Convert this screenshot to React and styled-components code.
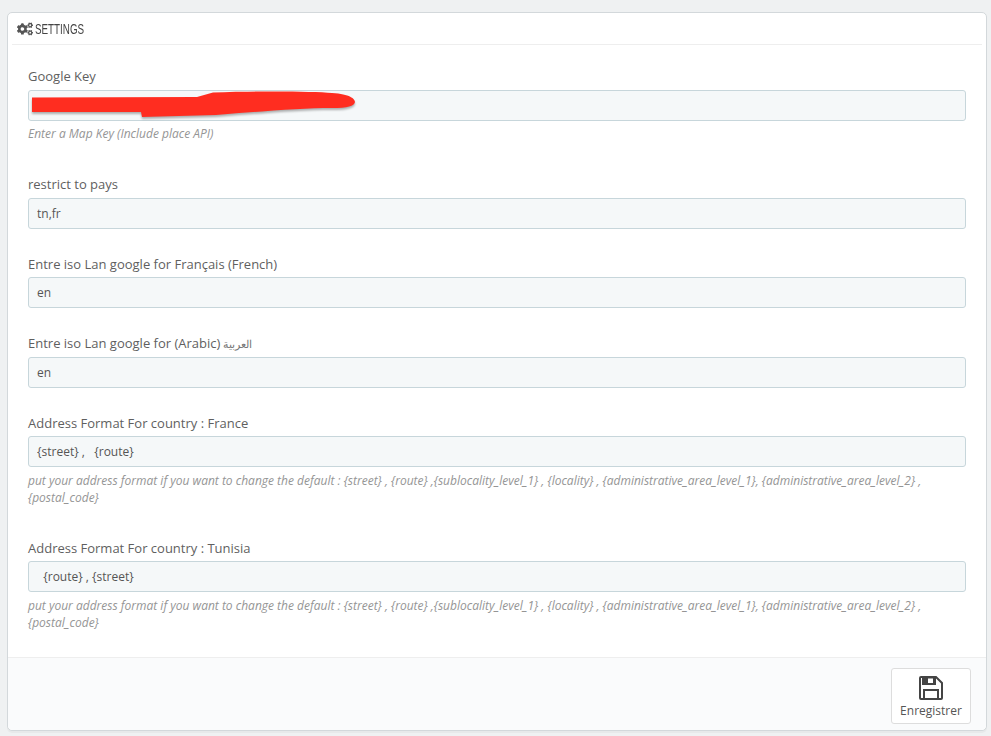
import styled, { createGlobalStyle } from 'styled-components'
import { FaCogs } from 'react-icons/fa'

const addressHelp = "put your address format if you want to change the default : {street} , {route} ,{sublocality_level_1} , {locality} , {administrative_area_level_1}, {administrative_area_level_2} , {postal_code}";

const fields = [
  { label: "Google Key", value: "", help: "Enter a Map Key (Include place API)", redacted: true },
  { label: "restrict to pays", value: "tn,fr" },
  { label: "Entre iso Lan google for Français (French)", value: "en" },
  { label: "Entre iso Lan google for (Arabic)", arabic: "العربية", value: "en" },
  { label: "Address Format For country : France", value: "{street} ,   {route}", help: addressHelp },
  { label: "Address Format For country : Tunisia", value: "  {route} , {street}", help: addressHelp },
];

const Scribble = () => (
  <ScribbleSvg viewBox="0 0 326 30" width="326" height="30">
    <path
      d="M0 6.5 L165 6 L181 1.5 C220 0 280 0 300 2 C318 3 323 8 323 11 C322 15 316 17 300 17 C270 17 235 20 184 24 L110 26 L109 21 L0 21 Z"
      fill="#ff2d20"
    />
  </ScribbleSvg>
);

const SaveIcon = () => (
  <svg viewBox="0 0 24 24" width="24" height="24">
    <path d="M2 1 H17 L23 7 V22 a1 1 0 0 1 -1 1 H2 a1 1 0 0 1 -1 -1 V2 a1 1 0 0 1 1 -1 Z" fill="none" stroke="#444" strokeWidth="2" />
    <path d="M3 1 H17 V9 H3 Z M9 2.5 V7 H14 V2.5 Z" fill="#444" fillRule="evenodd" />
    <rect x="5" y="14" width="14" height="9" fill="none" stroke="#444" strokeWidth="2" />
  </svg>
);

const App = () => {
  return (
    <>
      <GlobalStyle />
      <Panel>
        <Heading>
          <FaCogs size={16} />
          <HeadingText>Settings</HeadingText>
        </Heading>
        <Form>
          {fields.map((field) => (
            <Group key={field.label}>
              <Label>
                {field.label}
                {field.arabic && <Arabic>{field.arabic}</Arabic>}
              </Label>
              <InputWrap>
                <Input readOnly value={field.value} />
                {field.redacted && <Scribble />}
              </InputWrap>
              {field.help && <Help>{field.help}</Help>}
            </Group>
          ))}
        </Form>
        <Footer>
          <SaveButton type="button">
            <SaveIcon />
            Enregistrer
          </SaveButton>
        </Footer>
      </Panel>
    </>
  )
}

const GlobalStyle = createGlobalStyle`
  html, body {
    margin: 0;
    background: #eff1f2;
    font-family: "Open Sans", "Noto Sans", sans-serif;
    font-size: 12px;
    color: #555;
  }
  body {
    height: 736px;
    overflow: hidden;
  }
`

const Panel = styled.section`
  box-sizing: border-box;
  width: 980px;
  height: 719px;
  margin: 12px 0 0 7px;
  display: flex;
  flex-direction: column;
  background: #fff;
  border: 1px solid #d3d8db;
  border-radius: 5px;
  box-shadow: 0 2px 0 rgba(0, 0, 0, 0.03);
`

const Heading = styled.h3`
  box-sizing: border-box;
  height: 32px;
  margin: 0 4px;
  padding-left: 5px;
  display: flex;
  align-items: center;
  gap: 2px;
  flex-shrink: 0;
  border-bottom: 1px solid #eeeeee;
  font-weight: 400;
  color: #555;
`

const HeadingText = styled.span`
  display: inline-block;
  font-family: "Liberation Sans", sans-serif;
  font-size: 15px;
  text-transform: uppercase;
  color: #444;
  transform: scaleX(0.655);
  transform-origin: left center;
`

const Form = styled.div`
  flex: 1;
  display: flex;
  flex-direction: column;
  gap: 26px;
  padding: 22.15px 20px 0;
`

const Group = styled.div`
  display: flex;
  flex-direction: column;
`

const Label = styled.label`
  margin-bottom: 3px;
  font-size: 13px;
  line-height: 19.5px;
  color: #5f5f5f;
`

const Arabic = styled.span`
  margin-left: 3px;
  font-size: 10.8px;
  color: #777;
`

const InputWrap = styled.div`
  position: relative;
`

const Input = styled.input`
  box-sizing: border-box;
  display: block;
  width: 100%;
  height: 31px;
  padding: 0 8px;
  background: #f5f8f9;
  border: 1px solid #c7d6db;
  border-radius: 3px;
  font-family: inherit;
  font-size: 12px;
  color: #555;
  white-space: pre;
  outline: none;
`

const ScribbleSvg = styled.svg`
  position: absolute;
  left: 4px;
  top: 1px;
  filter: drop-shadow(0 2px 1px rgba(0, 0, 0, 0.3));
`

const Help = styled.p`
  margin: 5.5px 0 6.4px;
  font-size: 12px;
  font-style: italic;
  line-height: 16.8px;
  color: #959595;
`

const Footer = styled.footer`
  box-sizing: border-box;
  height: 73px;
  display: flex;
  justify-content: flex-end;
  align-items: flex-start;
  padding: 10px 15px 0 0;
  background: #fafbfc;
  border-top: 1px solid #eeeeee;
  border-radius: 0 0 5px 5px;
`

const SaveButton = styled.button`
  box-sizing: border-box;
  width: 80px;
  height: 56px;
  display: flex;
  flex-direction: column;
  align-items: center;
  justify-content: flex-end;
  gap: 2px;
  padding: 0 0 4px;
  background: #fff;
  border: 1px solid #dddddd;
  border-radius: 3px;
  font-family: inherit;
  font-size: 12px;
  color: #555;
`

export default App;
